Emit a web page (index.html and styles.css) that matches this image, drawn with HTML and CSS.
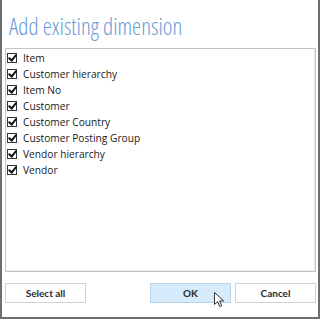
FILE: index.html
```html
<!DOCTYPE html>
<html lang="en">
<head>
  <meta charset="UTF-8" />
  <title>Add existing dimension</title>
  <link rel="stylesheet" href="styles.css">
</head>
<body>
  <div class="dialog">
    <h1 class="dialog-title">Add existing dimension</h1>

    <ul class="dim-list">
      <li class="dim-item"><span class="check"></span>Item</li>
      <li class="dim-item"><span class="check"></span>Customer hierarchy</li>
      <li class="dim-item"><span class="check"></span>Item No</li>
      <li class="dim-item"><span class="check"></span>Customer</li>
      <li class="dim-item"><span class="check"></span>Customer Country</li>
      <li class="dim-item"><span class="check"></span>Customer Posting Group</li>
      <li class="dim-item"><span class="check"></span>Vendor hierarchy</li>
      <li class="dim-item"><span class="check"></span>Vendor</li>
    </ul>

    <div class="actions">
      <button class="btn">Select all</button>
      <div class="actions-right">
        <button class="btn btn-ok">OK
          <svg class="cursor" width="11" height="16" viewBox="0 0 11 16">
            <path d="M0.5 0.5 L0.5 12.5 L3.6 9.6 L5.8 14.6 L7.7 13.8 L5.6 8.9 L9.6 8.9 Z" fill="#fff" stroke="#333" stroke-width="1" stroke-linejoin="round"/>
          </svg>
        </button>
        <button class="btn">Cancel</button>
      </div>
    </div>
  </div>
</body>
</html>
```

FILE: styles.css
```css
html, body {
  margin: 0;
  padding: 0;
  background: #fff;
}
.dialog {
  width: 316px;
  height: 317px;
  border: 2px solid #6e6e6e;
  border-top: none;
  display: flex;
  flex-direction: column;
  font-family: "Open Sans", Roboto, sans-serif;
}
.dialog-title {
  margin: 0;
  height: 48px;
  padding-left: 7px;
  font-family: "Open Sans", sans-serif;
  font-weight: 300;
  font-stretch: 83%;
  font-size: 23px;
  line-height: 53px;
  color: #6b9bd6;
}
.dim-list {
  list-style: none;
  margin: 0 2px 0 3px;
  padding: 1px 0 0 0;
  height: 221px;
  border: 1px solid #c4c4c4;
  box-shadow: inset -1px -1px 0 #e8e8e8;
}
.dim-item {
  display: flex;
  align-items: center;
  height: 16px;
  padding-left: 1px;
  font-size: 10.2px;
  font-stretch: 90%;
  color: #1a1a1a;
}
.check {
  width: 8px;
  height: 8px;
  border: 1px solid #333;
  margin-right: 6px;
  position: relative;
  flex-shrink: 0;
}
.check::after {
  content: "";
  position: absolute;
  left: 2px;
  top: -1px;
  width: 3px;
  height: 6px;
  border: solid #111;
  border-width: 0 2px 2px 0;
  transform: rotate(40deg);
}
.actions {
  display: flex;
  justify-content: space-between;
  margin: 11px 2px 0 3px;
}
.actions-right {
  display: flex;
  gap: 4px;
}
.btn {
  width: 81px;
  height: 20px;
  padding: 0;
  border: 1px solid #d2d2d2;
  background: #fff;
  font-family: Lato, "Liberation Sans", sans-serif;
  font-weight: 700;
  font-size: 10px;
  color: #2b2b2b;
  position: relative;
}
.btn-ok {
  background: #d6ebfc;
  border-color: #b9d3e8;
}
.cursor {
  position: absolute;
  left: 63px;
  top: 8px;
}
```
